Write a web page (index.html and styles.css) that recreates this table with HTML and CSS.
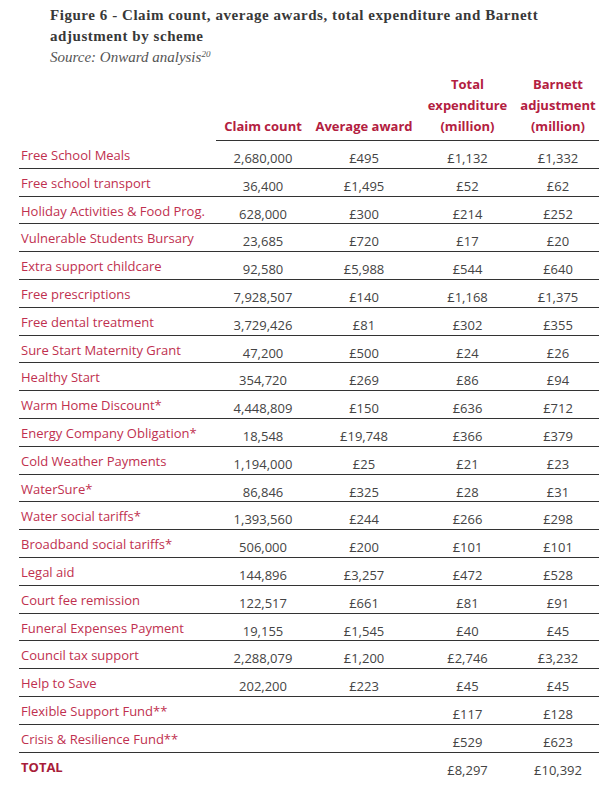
FILE: index.html
```html
<!DOCTYPE html>
<html lang="en">
<head>
<meta charset="utf-8">
<title>Figure 6</title>
<link rel="stylesheet" href="styles.css">
</head>
<body>
<div class="page">
  <div class="caption">
    <h1 class="title">Figure 6 - Claim count, average awards, total expenditure and Barnett adjustment by scheme</h1>
    <p class="source">Source: Onward analysis<sup>20</sup></p>
  </div>
  <div class="table">
    <div class="hrow">
      <div class="hcell"></div>
      <div class="hcell hnum">Claim count</div>
      <div class="hcell hnum">Average award</div>
      <div class="hcell hnum">Total<br>expenditure<br>(million)</div>
      <div class="hcell hnum">Barnett<br>adjustment<br>(million)</div>
    </div>
    <div class="row"><div class="label">Free School Meals</div><div class="num">2,680,000</div><div class="num">£495</div><div class="num">£1,132</div><div class="num">£1,332</div></div>
    <div class="row"><div class="label">Free school transport</div><div class="num">36,400</div><div class="num">£1,495</div><div class="num">£52</div><div class="num">£62</div></div>
    <div class="row"><div class="label">Holiday Activities &amp; Food Prog.</div><div class="num">628,000</div><div class="num">£300</div><div class="num">£214</div><div class="num">£252</div></div>
    <div class="row"><div class="label">Vulnerable Students Bursary</div><div class="num">23,685</div><div class="num">£720</div><div class="num">£17</div><div class="num">£20</div></div>
    <div class="row"><div class="label">Extra support childcare</div><div class="num">92,580</div><div class="num">£5,988</div><div class="num">£544</div><div class="num">£640</div></div>
    <div class="row"><div class="label">Free prescriptions</div><div class="num">7,928,507</div><div class="num">£140</div><div class="num">£1,168</div><div class="num">£1,375</div></div>
    <div class="row"><div class="label">Free dental treatment</div><div class="num">3,729,426</div><div class="num">£81</div><div class="num">£302</div><div class="num">£355</div></div>
    <div class="row"><div class="label">Sure Start Maternity Grant</div><div class="num">47,200</div><div class="num">£500</div><div class="num">£24</div><div class="num">£26</div></div>
    <div class="row"><div class="label">Healthy Start</div><div class="num">354,720</div><div class="num">£269</div><div class="num">£86</div><div class="num">£94</div></div>
    <div class="row"><div class="label">Warm Home Discount*</div><div class="num">4,448,809</div><div class="num">£150</div><div class="num">£636</div><div class="num">£712</div></div>
    <div class="row"><div class="label">Energy Company Obligation*</div><div class="num">18,548</div><div class="num">£19,748</div><div class="num">£366</div><div class="num">£379</div></div>
    <div class="row"><div class="label">Cold Weather Payments</div><div class="num">1,194,000</div><div class="num">£25</div><div class="num">£21</div><div class="num">£23</div></div>
    <div class="row"><div class="label">WaterSure*</div><div class="num">86,846</div><div class="num">£325</div><div class="num">£28</div><div class="num">£31</div></div>
    <div class="row"><div class="label">Water social tariffs*</div><div class="num">1,393,560</div><div class="num">£244</div><div class="num">£266</div><div class="num">£298</div></div>
    <div class="row"><div class="label">Broadband social tariffs*</div><div class="num">506,000</div><div class="num">£200</div><div class="num">£101</div><div class="num">£101</div></div>
    <div class="row"><div class="label">Legal aid</div><div class="num">144,896</div><div class="num">£3,257</div><div class="num">£472</div><div class="num">£528</div></div>
    <div class="row"><div class="label">Court fee remission</div><div class="num">122,517</div><div class="num">£661</div><div class="num">£81</div><div class="num">£91</div></div>
    <div class="row"><div class="label">Funeral Expenses Payment</div><div class="num">19,155</div><div class="num">£1,545</div><div class="num">£40</div><div class="num">£45</div></div>
    <div class="row"><div class="label">Council tax support</div><div class="num">2,288,079</div><div class="num">£1,200</div><div class="num">£2,746</div><div class="num">£3,232</div></div>
    <div class="row"><div class="label">Help to Save</div><div class="num">202,200</div><div class="num">£223</div><div class="num">£45</div><div class="num">£45</div></div>
    <div class="row"><div class="label">Flexible Support Fund**</div><div class="num"></div><div class="num"></div><div class="num">£117</div><div class="num">£128</div></div>
    <div class="row"><div class="label">Crisis &amp; Resilience Fund**</div><div class="num"></div><div class="num"></div><div class="num">£529</div><div class="num">£623</div></div>
    <div class="row total"><div class="label">TOTAL</div><div class="num"></div><div class="num"></div><div class="num">£8,297</div><div class="num">£10,392</div></div>
  </div>
</div>
</body>
</html>
```
FILE: styles.css
```css
html, body {
  margin: 0;
  padding: 0;
  background: #ffffff;
}

.page {
  padding: 5px 14px 0 19px;
}

.caption {
  padding-left: 31px;
}

.title {
  margin: 0;
  width: 500px;
  font-family: "Liberation Serif", "DejaVu Serif", serif;
  font-weight: bold;
  font-size: 15px;
  letter-spacing: 0.55px;
  line-height: 21px;
  color: #383838;
}

.source {
  margin: 0;
  font-family: "Liberation Serif", "DejaVu Serif", serif;
  font-style: italic;
  font-size: 15px;
  line-height: 21px;
  color: #555555;
}

.source sup {
  font-size: 9px;
  line-height: 0;
  vertical-align: 5px;
}

.table {
  margin-top: 6px;
  width: 580px;
  font-family: "Open Sans", "DejaVu Sans", sans-serif;
}

.hrow,
.row {
  display: grid;
  grid-template-columns: 197px 94px 108px 99px 82px;
}

.hcell {
  display: flex;
  align-items: flex-end;
  justify-content: center;
  text-align: center;
  padding-bottom: 3px;
  font-weight: bold;
  font-size: 13px;
  line-height: 21px;
  color: #b3203f;
  white-space: nowrap;
}

.hnum {
  border-bottom: 1px solid #333333;
}

.row {
  height: 27.8px;
  box-sizing: border-box;
  border-bottom: 1px solid #333333;
}

.row.total {
  border-bottom: none;
}

.label {
  padding: 5px 0 0 2px;
  font-size: 13px;
  line-height: 18px;
  color: #c0304f;
  white-space: nowrap;
}

.total .label {
  font-weight: bold;
  color: #a81d3a;
}

.num {
  padding-top: 8px;
  text-align: center;
  font-size: 13px;
  line-height: 18px;
  color: #444444;
}
```
